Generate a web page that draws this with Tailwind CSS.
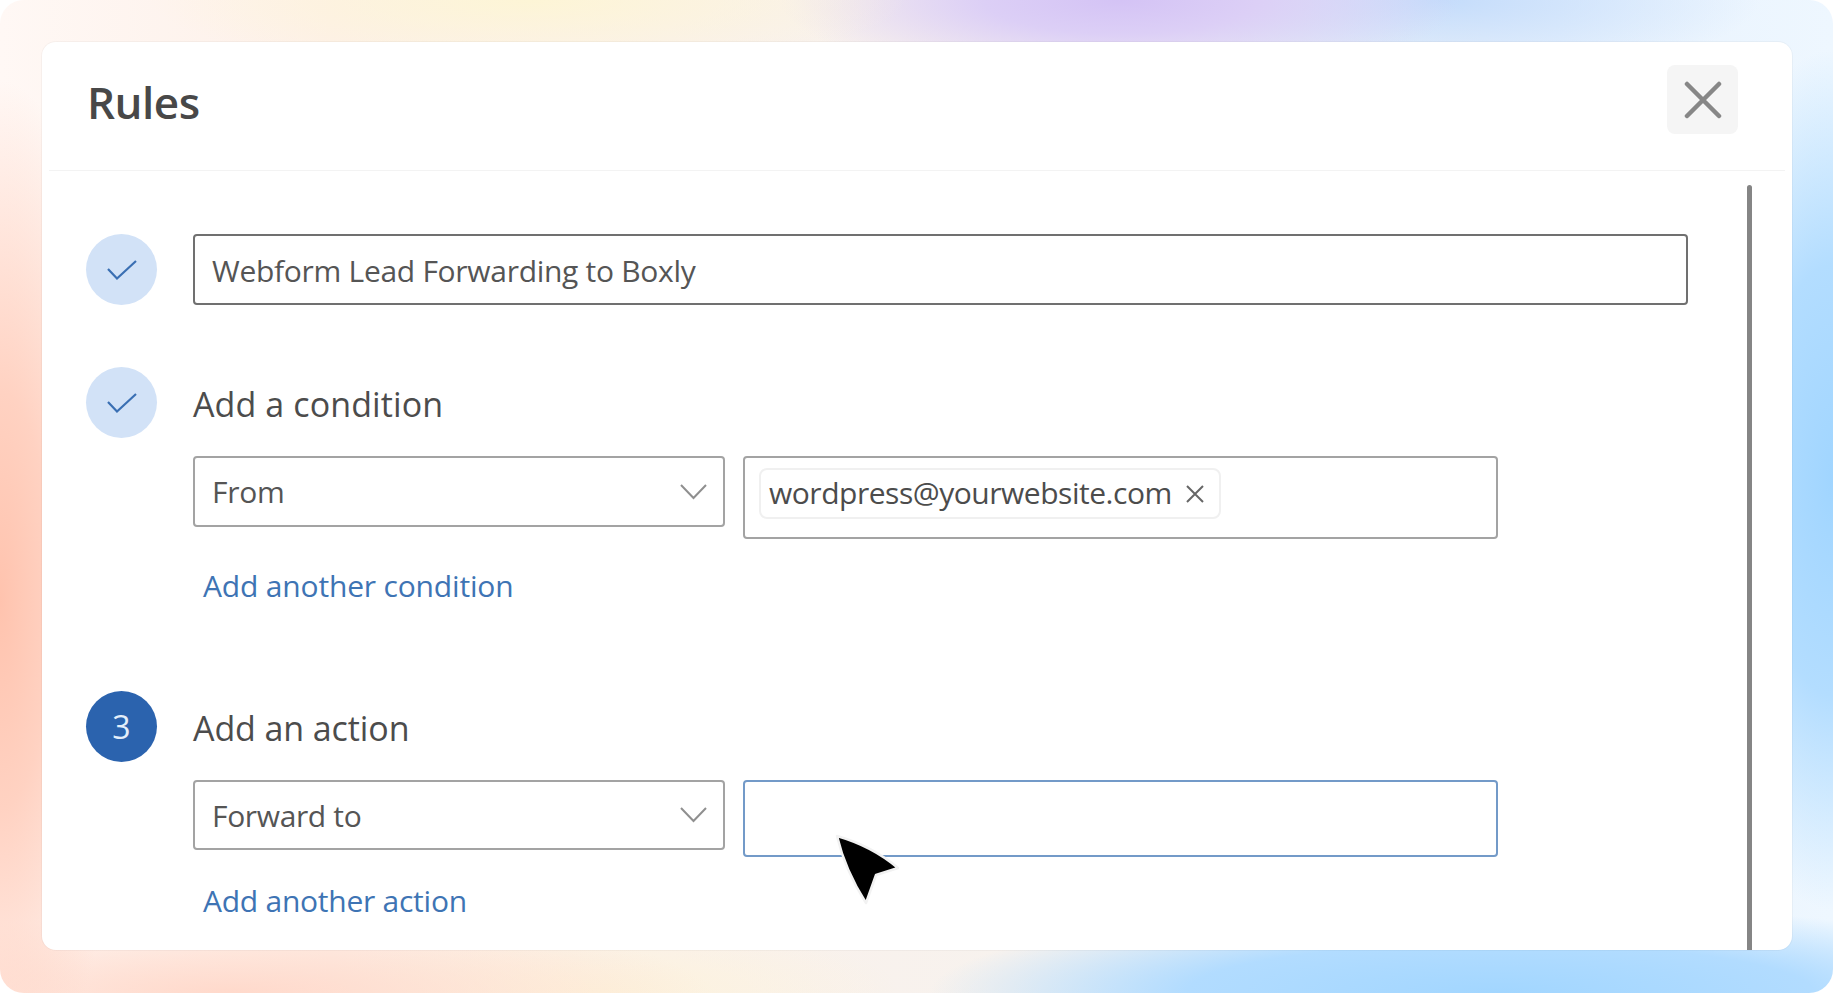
<!DOCTYPE html>
<html lang="en">
<head>
  <meta charset="UTF-8" />
  <title>Rules</title>
  <script src="https://cdn.jsdelivr.net/npm/@tailwindcss/browser@4"></script>
</head>
<body class="bg-white overflow-hidden font-['Open_Sans',sans-serif]">
  <div class="relative w-[1833px] h-[993px] rounded-[24px] pt-[42px] pl-[42px] pr-[41px] pb-[43px] bg-[radial-gradient(ellipse_130px_520px_at_0px_600px,#ffc3ae_0%,#ffd2c2_40%,transparent_100%),radial-gradient(ellipse_480px_80px_at_230px_993px,#ffd9cb_0%,transparent_100%),radial-gradient(ellipse_300px_70px_at_600px_993px,#fdf3dc_0%,transparent_100%),radial-gradient(ellipse_380px_70px_at_530px_0px,#fdf5d6_0%,transparent_100%),radial-gradient(ellipse_340px_85px_at_1120px_0px,#d4c3f5_0%,#dccff6_40%,transparent_100%),radial-gradient(ellipse_320px_80px_at_1440px_0px,#c4dcfb_0%,transparent_100%),radial-gradient(ellipse_150px_430px_at_1833px_480px,#a0d5ff_0%,#b3ddff_50%,transparent_100%),radial-gradient(ellipse_570px_90px_at_1500px_993px,#a2d6ff_0%,#b2dcff_55%,transparent_100%),linear-gradient(90deg,#fff8f5_0%,#fdf0e8_18%,#f7f2ee_55%,#e8f2fd_85%,#eef7ff_100%)]">
    <div class="flex flex-col w-full h-full bg-white rounded-[14px] overflow-hidden shadow-[0_0_0_1px_rgba(0,0,0,0.03)]">
      <div class="flex shrink-0 items-start justify-between h-[129px] mx-[7px] border-b border-[#f3f3f3] pl-[38px] pr-[47px]">
        <h1 class="mt-[30px] text-[44px] leading-[60px] tracking-[-0.5px] font-semibold text-[#484848]">Rules</h1>
        <button class="flex items-center justify-center mt-[23px] w-[71px] h-[69px] rounded-[8px] bg-[#f5f5f5]">
          <svg width="38" height="38" viewBox="0 0 38 38" fill="none" stroke="#878787" stroke-width="4.5" stroke-linecap="round"><path d="M3 3 L35 35 M35 3 L3 35"/></svg>
        </button>
      </div>

      <div class="flex flex-1 min-h-0">
        <div class="flex-1 pl-[44px] pt-[63px]">
          <div class="flex gap-[36px]">
            <div class="flex shrink-0 items-center justify-center w-[71px] h-[71px] rounded-full bg-[#d2e2f7]">
              <svg width="32" height="22" viewBox="0 0 32 22" fill="none" stroke="#3a6fb3" stroke-width="2.2"><path d="M2 10 L11 19.5 L30 2"/></svg>
            </div>
            <div class="flex items-center w-[1495px] h-[71px] rounded-[4px] border-2 border-[#707070] pl-[17px] pt-[2px] text-[30px] tracking-[-0.29px] text-[#555555]">Webform Lead Forwarding to Boxly</div>
          </div>

          <div class="flex gap-[36px] mt-[62px]">
            <div class="flex shrink-0 items-center justify-center w-[71px] h-[71px] rounded-full bg-[#d2e2f7]">
              <svg width="32" height="22" viewBox="0 0 32 22" fill="none" stroke="#3a6fb3" stroke-width="2.2"><path d="M2 10 L11 19.5 L30 2"/></svg>
            </div>
            <div>
              <div class="flex items-center h-[71px] pt-[3px] text-[34px] tracking-[0.1px] text-[#4c4c4c]">Add a condition</div>
              <div class="flex items-start gap-[18px] mt-[18px]">
                <div class="flex items-center justify-between w-[532px] h-[71px] rounded-[4px] border-2 border-[#a3a3a3] pl-[17px] pr-[16px] text-[30px] tracking-[-0.3px] text-[#555555]">
                  <span>From</span>
                  <svg width="27" height="16" viewBox="0 0 27 16" fill="none" stroke="#8f8f8f" stroke-width="2"><path d="M1 1 L13.5 14 L26 1"/></svg>
                </div>
                <div class="w-[755px] h-[83px] rounded-[4px] border-2 border-[#a3a3a3] pl-[14px] pt-[10px]">
                  <div class="flex items-center w-[462px] h-[51px] rounded-[8px] border-2 border-[#f0f0f0] pl-[8px] pb-[3px] text-[30px] tracking-[-0.47px] text-[#4c4c4c]">
                    <span>wordpress@yourwebsite.com</span>
                    <svg class="ml-[13px] mt-[3px]" width="20" height="20" viewBox="0 0 20 20" fill="none" stroke="#666666" stroke-width="2"><path d="M2 2 L18 18 M18 2 L2 18"/></svg>
                  </div>
                </div>
              </div>
              <a class="block h-[40px] mt-[28px] pl-[10px] text-[30px] leading-[38px] tracking-[-0.17px] text-[#3e74b4]">Add another condition</a>
            </div>
          </div>

          <div class="flex gap-[36px] mt-[84px]">
            <div class="flex shrink-0 items-center justify-center w-[71px] h-[71px] rounded-full bg-[#2b63ae] text-[32px] text-[#e4eefa]">3</div>
            <div>
              <div class="flex items-center h-[71px] pt-[3px] text-[34px] tracking-[-0.1px] text-[#4c4c4c]">Add an action</div>
              <div class="flex items-start gap-[18px] mt-[18px]">
                <div class="flex items-center justify-between w-[532px] h-[70px] rounded-[4px] border-2 border-[#a3a3a3] pl-[17px] pr-[16px] text-[30px] tracking-[-0.35px] text-[#555555]">
                  <span>Forward to</span>
                  <svg width="27" height="16" viewBox="0 0 27 16" fill="none" stroke="#8f8f8f" stroke-width="2"><path d="M1 1 L13.5 14 L26 1"/></svg>
                </div>
                <div class="w-[755px] h-[77px] rounded-[4px] border-2 border-[#739ac8]"></div>
              </div>
              <a class="block h-[40px] mt-[24px] pl-[10px] text-[30px] leading-[40px] tracking-[-0.25px] text-[#3e74b4]">Add another action</a>
            </div>
          </div>
        </div>
        <div class="shrink-0 w-[5px] mt-[14px] mr-[40px] rounded-t-[3px] bg-[#858585]"></div>
      </div>
    </div>

    <svg class="absolute left-[828px] top-[828px]" width="80" height="84" viewBox="828 828 80 84">
      <path d="M837 836 Q872 846 898 868 L876 875 L866 903 Q845 870 837 836 Z" fill="#000000" stroke="#f2f2f2" stroke-width="2.5" stroke-linejoin="round"/>
    </svg>
  </div>
</body>
</html>
